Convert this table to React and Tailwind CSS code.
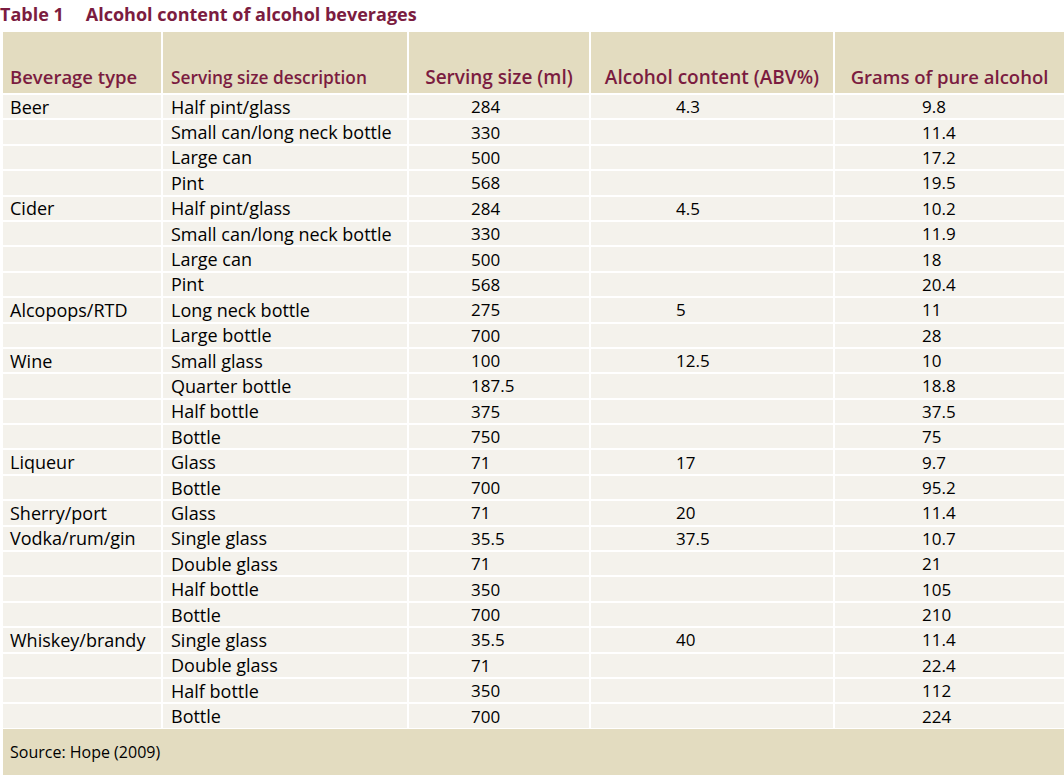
const ROWS = [
  ['Beer', 'Half pint/glass', '284', '4.3', '9.8'],
  ['', 'Small can/long neck bottle', '330', '', '11.4'],
  ['', 'Large can', '500', '', '17.2'],
  ['', 'Pint', '568', '', '19.5'],
  ['Cider', 'Half pint/glass', '284', '4.5', '10.2'],
  ['', 'Small can/long neck bottle', '330', '', '11.9'],
  ['', 'Large can', '500', '', '18'],
  ['', 'Pint', '568', '', '20.4'],
  ['Alcopops/RTD', 'Long neck bottle', '275', '5', '11'],
  ['', 'Large bottle', '700', '', '28'],
  ['Wine', 'Small glass', '100', '12.5', '10'],
  ['', 'Quarter bottle', '187.5', '', '18.8'],
  ['', 'Half bottle', '375', '', '37.5'],
  ['', 'Bottle', '750', '', '75'],
  ['Liqueur', 'Glass', '71', '17', '9.7'],
  ['', 'Bottle', '700', '', '95.2'],
  ['Sherry/port', 'Glass', '71', '20', '11.4'],
  ['Vodka/rum/gin', 'Single glass', '35.5', '37.5', '10.7'],
  ['', 'Double glass', '71', '', '21'],
  ['', 'Half bottle', '350', '', '105'],
  ['', 'Bottle', '700', '', '210'],
  ['Whiskey/brandy', 'Single glass', '35.5', '40', '11.4'],
  ['', 'Double glass', '71', '', '22.4'],
  ['', 'Half bottle', '350', '', '112'],
  ['', 'Bottle', '700', '', '224'],
]

// text columns are set a touch larger than the number columns
const cellStyle = [
  'pl-[7px] text-[18px]',
  'pl-[8px] text-[18px]',
  'pl-[62px] text-[17px]',
  'pl-[85px] text-[17px]',
  'pl-[87px] text-[17px]',
]

export default function App() {
  return (
    <div className="w-[1064px] h-[776px] bg-white overflow-hidden font-['Open_Sans',sans-serif] text-black">
      <h1 className="h-[32px] pt-[1px] flex gap-[22px] text-[18px] font-bold text-[#7b1c40] leading-[26px]">
        <span>Table 1</span>
        <span>Alcohol content of alcohol beverages</span>
      </h1>

      <div className="ml-[3px] grid grid-cols-[158px_244px_180px_242px_229px] gap-[2px]">
        {/* header */}
        <div className="h-[61px] bg-[#e3dcc0] flex items-end pl-[7px] pb-[2px] text-[18.5px] font-semibold text-[#7b1c40]">Beverage type</div>
        <div className="h-[61px] bg-[#e3dcc0] flex items-end pl-[8px] pb-[2px] text-[17.3px] font-semibold text-[#7b1c40]">Serving size description</div>
        <div className="h-[61px] bg-[#e3dcc0] flex items-end justify-center pb-[2px] text-[19px] font-semibold text-[#7b1c40]">Serving size (ml)</div>
        <div className="h-[61px] bg-[#e3dcc0] flex items-end justify-center pb-[2px] text-[19px] font-semibold text-[#7b1c40]">Alcohol content (ABV%)</div>
        <div className="h-[61px] bg-[#e3dcc0] flex items-end justify-center pb-[2px] text-[18.5px] font-semibold text-[#7b1c40]">Grams of pure alcohol</div>

        {ROWS.map((row, i) =>
          row.map((cell, j) => (
            <div key={i + '-' + j} className={`h-[23.4px] bg-[#f4f2ec] flex items-center leading-none whitespace-nowrap ${cellStyle[j]}`}>
              {cell}
            </div>
          ))
        )}
      </div>

      <div className="ml-[3px] mt-[1px] h-[46px] bg-[#e3dcc0] flex items-center pl-[7px] text-[16px]">
        Source: Hope (2009)
      </div>
    </div>
  )
}
